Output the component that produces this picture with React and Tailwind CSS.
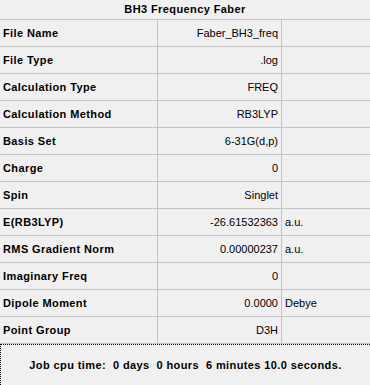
import React from "react";

const rows = [
  { label: "File Name", value: "Faber_BH3_freq", unit: "" },
  { label: "File Type", value: ".log", unit: "" },
  { label: "Calculation Type", value: "FREQ", unit: "" },
  { label: "Calculation Method", value: "RB3LYP", unit: "" },
  { label: "Basis Set", value: "6-31G(d,p)", unit: "" },
  { label: "Charge", value: "0", unit: "" },
  { label: "Spin", value: "Singlet", unit: "" },
  { label: "E(RB3LYP)", value: "-26.61532363", unit: "a.u." },
  { label: "RMS Gradient Norm", value: "0.00000237", unit: "a.u." },
  { label: "Imaginary Freq", value: "0", unit: "" },
  { label: "Dipole Moment", value: "0.0000", unit: "Debye" },
  { label: "Point Group", value: "D3H", unit: "" },
];

function SummaryRow({ label, value, unit }) {
  return (
    <div className="flex h-[27px] border-b border-[#c3c3c3]">
      <div className="flex w-[158px] items-center border-r border-[#c3c3c3] pl-[3px] font-bold tracking-[0.4px]">
        {label}
      </div>
      <div className="flex w-[124px] items-center justify-end border-r border-[#c3c3c3] pr-[3px]">
        {value}
      </div>
      <div className="flex flex-1 items-center pl-[3px]">{unit}</div>
    </div>
  );
}

export default function App() {
  return (
    <div
      className="flex h-[385px] w-[370px] flex-col bg-[#f0f0f0] text-[11px] text-black"
      style={{ fontFamily: '"Liberation Sans", Arial, sans-serif' }}
    >
      <div className="flex h-[20px] items-center justify-center border-b border-[#c3c3c3] font-bold tracking-[0.4px]">
        BH3 Frequency Faber
      </div>
      {rows.map((r) => (
        <SummaryRow key={r.label} {...r} />
      ))}
      <div className="flex flex-1 items-center justify-center border-l border-t border-dotted border-black font-bold tracking-[0.4px] whitespace-pre">
        {"Job cpu time:  0 days  0 hours  6 minutes 10.0 seconds."}
      </div>
    </div>
  );
}
